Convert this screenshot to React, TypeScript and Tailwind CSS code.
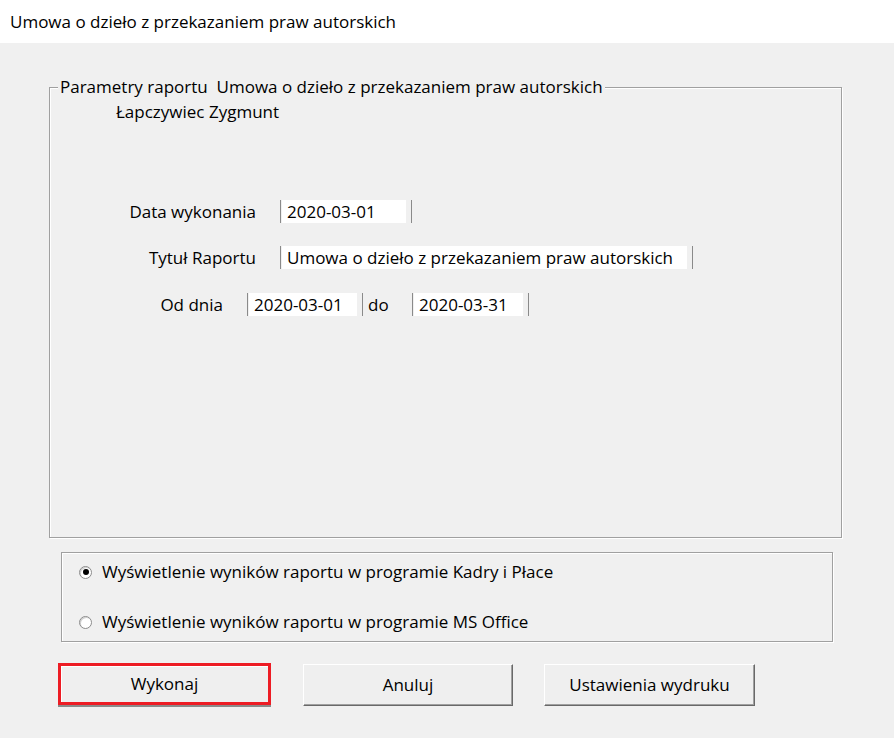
import React from 'react';

const font = { fontFamily: '"Open Sans", "Noto Sans", sans-serif' };

function Field({ value, width }: { value: string; width: string }) {
  return (
    <div className={`flex h-[23px] border-l border-r border-[#8a8a8a] pl-[1px] pr-[5px] ${width}`}>
      <div className="flex-1 bg-white pl-[5px] leading-[23px] whitespace-nowrap overflow-hidden">{value}</div>
    </div>
  );
}

function Radio({ checked, label }: { checked?: boolean; label: string }) {
  return (
    <div className="flex items-center h-[22px]">
      <span className="w-[13px] h-[13px] rounded-full border border-[#8c8c8c] bg-white flex items-center justify-center shadow-[inset_1px_1px_0_#d0d0d0]">
        {checked ? <span className="w-[6px] h-[6px] rounded-full bg-black" /> : null}
      </span>
      <span className="ml-[10px]">{label}</span>
    </div>
  );
}

export default function App() {
  const btn =
    'h-[42px] bg-[#efefef] border border-t-white border-l-white border-r-[#696969] border-b-[#696969] shadow-[inset_-1px_-1px_0_#a0a0a0] flex items-center justify-center';

  return (
    <div className="w-[894px] h-[738px] bg-[#f0f0f0] text-black text-[17px] overflow-hidden" style={font}>
      {/* pasek tytułu */}
      <div className="h-[43px] bg-white flex items-center pl-[10px]">
        Umowa o dzieło z przekazaniem praw autorskich
      </div>

      {/* parametry raportu */}
      <div className="relative ml-[49px] mt-[44px] w-[793px] h-[451px] border border-[#a0a0a0] shadow-[1px_1px_0_white,inset_1px_1px_0_white]">
        <div className="absolute left-[8px] -top-[12px] px-[2px] bg-[#f0f0f0] leading-[22px] whitespace-pre">
          Parametry raportu  Umowa o dzieło z przekazaniem praw autorskich
        </div>
        <div className="pt-[13px] pl-[66px] leading-[22px]">Łapczywiec Zygmunt</div>

        <div className="mt-[77px] flex items-center h-[23px]">
          <div className="w-[206px] text-right">Data wykonania</div>
          <div className="ml-[24px]">
            <Field value="2020-03-01" width="w-[132px]" />
          </div>
        </div>
        <div className="mt-[23px] flex items-center h-[23px]">
          <div className="w-[206px] text-right">Tytuł Raportu</div>
          <div className="ml-[24px]">
            <Field value="Umowa o dzieło z przekazaniem praw autorskich" width="w-[413px]" />
          </div>
        </div>
        <div className="mt-[24px] flex items-center h-[23px]">
          <div className="w-[173px] text-right">Od dnia</div>
          <div className="ml-[24px]">
            <Field value="2020-03-01" width="w-[116px]" />
          </div>
          <div className="w-[49px] pl-[5px]">do</div>
          <Field value="2020-03-31" width="w-[117px]" />
        </div>
      </div>

      {/* sposób wyświetlenia */}
      <div className="ml-[61px] mt-[14px] w-[772px] h-[90px] border border-[#a0a0a0] shadow-[1px_1px_0_white,inset_1px_1px_0_white] pl-[17px] pt-[8px] flex flex-col gap-[28px]">
        <Radio checked label="Wyświetlenie wyników raportu w programie Kadry i Płace" />
        <Radio label="Wyświetlenie wyników raportu w programie MS Office" />
      </div>

      {/* przyciski */}
      <div className="mt-[22px] flex items-start">
        <button className="-mt-[1px] h-[42px] ml-[58px] w-[213px] bg-[#efefef] border-[3px] border-[#ed1c24] shadow-[inset_1px_1px_0_white,0_2px_0_#8a8a8a] flex items-center justify-center">
          Wykonaj
        </button>
        <button className={`${btn} ml-[32px] w-[210px]`}>Anuluj</button>
        <button className={`${btn} ml-[31px] w-[211px]`}>Ustawienia wydruku</button>
      </div>
    </div>
  );
}
